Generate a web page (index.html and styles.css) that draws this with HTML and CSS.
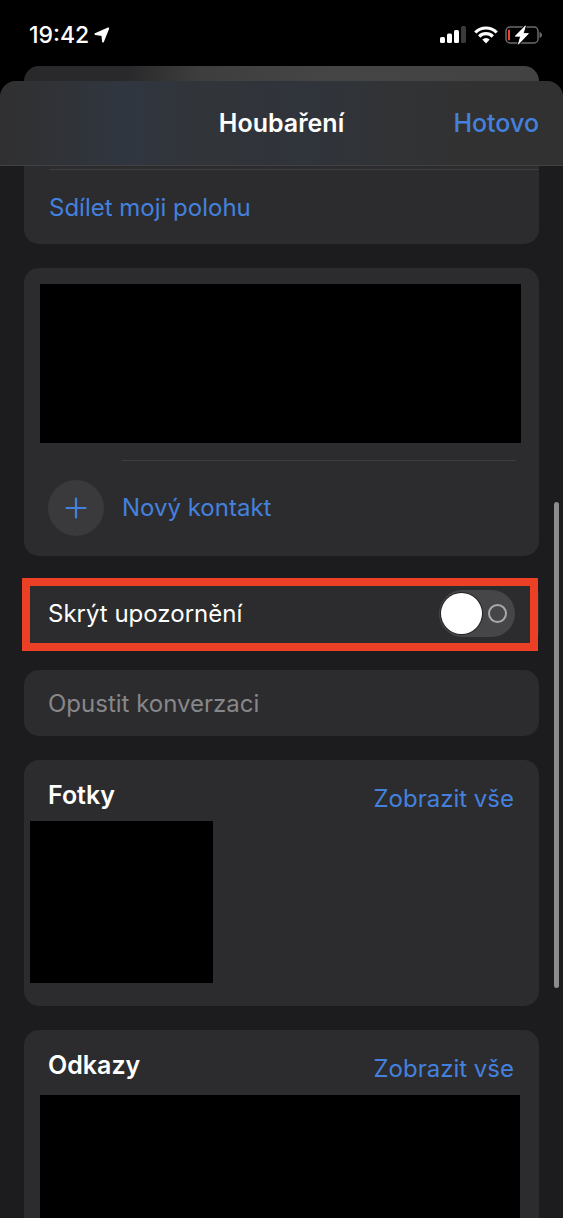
FILE: index.html
```html
<!DOCTYPE html>
<html lang="cs">
<head>
<meta charset="utf-8">
<meta name="viewport" content="width=device-width, initial-scale=1">
<title>Houbaření</title>
<link rel="stylesheet" href="styles.css">
</head>
<body>
<div class="screen">
  <div class="status">
    <div class="status-left">
      <time class="clock">19:42</time>
      <svg width="16" height="16" viewBox="0 0 16 16" aria-hidden="true"><path d="M14.300 1.300 1.300 7 8.300 8 9 14.600Z" fill="#fff" stroke="#fff" stroke-width="1.800" stroke-linejoin="round"/></svg>
    </div>
    <div class="status-right">
      <svg width="27" height="18" viewBox="0 0 27 18" aria-hidden="true">
        <rect x="0" y="11" width="5" height="6" rx="1.500" fill="#fff"/>
        <rect x="7" y="7.500" width="5" height="9.500" rx="1.500" fill="#fff"/>
        <rect x="14" y="4" width="5" height="13" rx="1.500" fill="#fff"/>
        <rect x="21" y="0" width="5" height="17" rx="1.500" fill="#3a3a3a"/>
      </svg>
      <svg width="24" height="18" viewBox="0 0 24 18" aria-hidden="true">
        <g fill="none" stroke="#fff" stroke-width="3.200">
          <path d="M1.300 6.500a15 15 0 0 1 21.400 0"/>
          <path d="M5.200 10.500a9.600 9.600 0 0 1 13.600 0"/>
        </g>
        <path d="M12 17.500 8.300 13.600a5.200 5.200 0 0 1 7.400 0Z" fill="#fff"/>
      </svg>
      <svg width="38" height="20" viewBox="0 0 38 20" aria-hidden="true">
        <rect x="1" y="2" width="32" height="16" rx="4" fill="none" stroke="#6b6b6b" stroke-width="1.500"/>
        <path d="M34.500 7c3.300.8 3.300 5.200 0 6Z" fill="#6b6b6b"/>
        <rect x="3" y="4.500" width="2" height="11" rx="1" fill="#f0432f"/>
        <path d="M20.500.8 10.200 11.200h5.400L13.300 19.300 23.500 8.600h-5.300Z" fill="#fff" stroke="#000" stroke-width="2.400" paint-order="stroke"/>
        <path d="M20.500.8 10.200 11.200h5.400L13.300 19.300 23.500 8.600h-5.300Z" fill="#fff" stroke="#fff" stroke-width="0.600" stroke-linejoin="round"/>
      </svg>
    </div>
  </div>

  <div class="back-card"></div>

  <main class="sheet">
    <header class="bar">
      <h1 class="title">Houbaření</h1>
      <button class="link done" type="button">Hotovo</button>
    </header>

    <div class="content">
      <section class="card share">
        <button class="link share-link" type="button">Sdílet moji polohu</button>
      </section>

      <section class="card people">
        <div class="redacted people-box"></div>
        <button class="link add" type="button">
          <span class="add-icon"><svg width="22" height="22" viewBox="0 0 22 22" aria-hidden="true"><path d="M11 1.500v19M1.500 11h19" stroke="currentColor" stroke-width="2.200" stroke-linecap="round"/></svg></span>
          <span>Nový kontakt</span>
        </button>
      </section>

      <section class="card row">
        <label for="mute">Skrýt upozornění</label>
        <input class="switch" id="mute" type="checkbox" role="switch">
        <div class="highlight"></div>
      </section>

      <section class="card row">
        <button class="leave" type="button" disabled>Opustit konverzaci</button>
      </section>

      <section class="card photos">
        <div class="head">
          <h2 class="heading">Fotky</h2>
          <a class="link" href="#fotky">Zobrazit vše</a>
        </div>
        <div class="redacted photo-box" id="fotky"></div>
      </section>

      <section class="card links">
        <div class="head">
          <h2 class="heading">Odkazy</h2>
          <a class="link" href="#odkazy">Zobrazit vše</a>
        </div>
        <div class="redacted links-box" id="odkazy"></div>
      </section>
    </div>
    <div class="scrollbar"></div>
  </main>
</div>
</body>
</html>
```
FILE: styles.css
```css
* { box-sizing: border-box; }

body {
  margin: 0;
  background: #000;
  color: #fff;
  font: 400 24px/32px Inter, "Liberation Sans", sans-serif;
}

button {
  padding: 0;
  border: 0;
  background: none;
  font: inherit;
  text-align: left;
}

h1, h2 { margin: 0; font-size: 25px; font-weight: 600; }

.screen {
  display: flex;
  flex-direction: column;
  min-height: 100vh;
}

.status {
  display: flex;
  justify-content: space-between;
  align-items: center;
  height: 66px;
  padding: 4px 20px 0 29px;
}

.status-left, .status-right { display: flex; align-items: center; }
.status-left { gap: 5px; }
.status-right { gap: 7px; }
.clock { font-size: 23px; font-weight: 500; }

.back-card {
  height: 15px;
  margin: 0 24px;
  border-radius: 15px 15px 0 0;
  background: linear-gradient(90deg, #29292b 0%, #29292b 20%, #3e3e3e 34%, #454545 60%, #424242 100%);
}

.sheet {
  position: relative;
  display: flex;
  flex-direction: column;
  flex: 1;
  overflow: hidden;
  border-radius: 16px 16px 0 0;
  background: #1c1c1e;
}

.bar {
  display: grid;
  grid-template-columns: 1fr auto 1fr;
  align-items: center;
  height: 85px;
  padding: 0 24px;
  border-bottom: 1px solid #414143;
  background: linear-gradient(90deg, #303031 0%, #303338 12%, #303640 22%, #313439 35%, #30343b 55%, #313335 70%, #313131 85%, #313131 100%);
}

.title { grid-column: 2; }
.done { justify-self: end; font-size: 25px; font-weight: 500; }
.link { color: #4481de; text-decoration: none; }

.content {
  display: flex;
  flex: 1;
  flex-direction: column;
  gap: 24px;
  padding: 0 24px;
}

.card {
  border-radius: 15px;
  background: #2c2c2e;
}

.share {
  padding: 3px 0 20px 25px;
  border-radius: 0 0 15px 15px;
}

.share-link {
  display: block;
  width: 100%;
  padding-top: 22px;
  border-top: 1px solid #413d3e;
}

.people { padding: 16px 18px 0 16px; }
.redacted { background: #000; }
.people-box { height: 159px; }

.add {
  display: grid;
  grid-template-columns: 56px 1fr;
  column-gap: 18px;
  align-items: center;
  width: 100%;
  padding: 37px 0 20px 8px;
  background: linear-gradient(#3d3d40, #3d3d40) 82px 17px / calc(100% - 87px) 1px no-repeat;
}

.add-icon {
  display: grid;
  place-items: center;
  height: 56px;
  border-radius: 50%;
  background: #3a3a3d;
}

.row {
  position: relative;
  display: flex;
  align-items: center;
  justify-content: space-between;
  height: 66px;
  padding: 1px 24px 0;
}

.highlight {
  position: absolute;
  inset: -2px 1px -5px -2px;
  border: 8px solid #eb4026;
  pointer-events: none;
}

.switch {
  appearance: none;
  display: flex;
  align-items: center;
  gap: 6px;
  width: 76px;
  height: 47px;
  margin: 0;
  padding: 0 2px;
  border-radius: 24px;
  background: #464649;
}

.switch::before {
  content: "";
  width: 41px;
  height: 41px;
  border-radius: 50%;
  background: #fff;
  box-shadow: 0 0 0 1px #222224;
}

.switch::after {
  content: "";
  width: 15px;
  height: 15px;
  border: 2px solid #aaaaac;
  border-radius: 50%;
}

.switch:checked { flex-direction: row-reverse; background: #30d158; }
.leave { color: #87878a; }

.photos { padding-bottom: 23px; }

.head {
  display: flex;
  align-items: center;
  justify-content: space-between;
  padding: 19px 25px 10px 24px;
}

.head .link { padding-top: 4px; margin-bottom: -4px; }

.photo-box {
  width: 183px;
  height: 162px;
  margin-left: 6px;
}

.links {
  display: flex;
  flex: 1;
  flex-direction: column;
  border-radius: 15px 15px 0 0;
}

.links .head { padding-bottom: 14px; }
.links-box { flex: 1; margin: 0 19px 0 16px; }

.scrollbar {
  position: absolute;
  top: 421px;
  right: 4px;
  width: 5px;
  height: 486px;
  border-radius: 3px;
  background: #8c8c8e;
}
```
